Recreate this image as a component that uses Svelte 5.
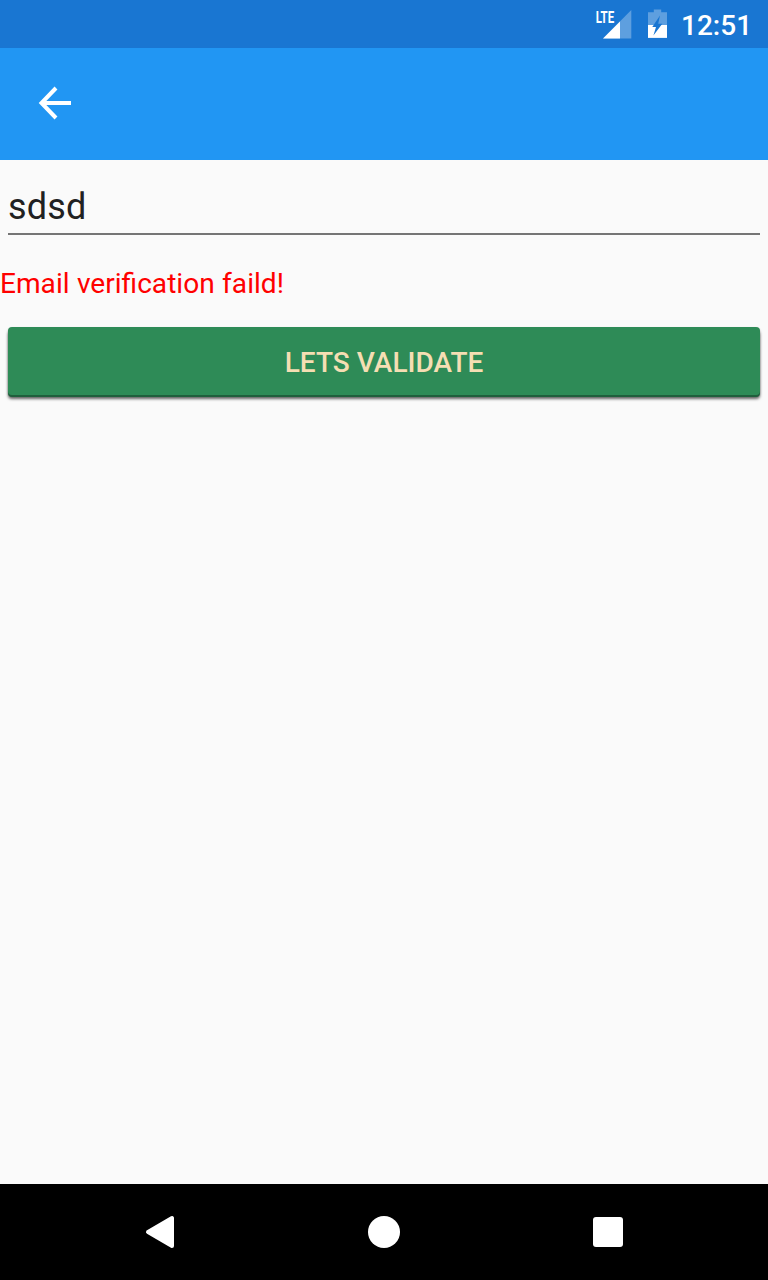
<script>
  let email = $state('sdsd');
  const message = 'Email verification faild!';
</script>

<div class="screen">
  <header class="status">
    <svg class="signal" width="38" height="32" viewBox="595 8 38 32" aria-label="LTE signal">
      <path d="M631.3 10V38.5H603Z" fill="#fff" fill-opacity=".3" />
      <path d="M620 21.6V38.5H603Z" fill="#fff" />
      <text x="595.7" y="22.5" textLength="18.5" lengthAdjust="spacingAndGlyphs">LTE</text>
    </svg>
    <svg class="battery" width="21" height="32" viewBox="647 8 21 32" aria-label="Battery charging">
      <path d="M653.8 9.5h7.4v2.7h5.8V25H648V12.2h5.8Z" fill="#fff" fill-opacity=".3" />
      <path d="M648 25H667v12.9H648Z" fill="#fff" />
      <path d="M660 15.5L652.3 27H656L653.4 35.5L662.3 23.7H658.2Z" fill="#1976d2" />
    </svg>
    <time>12:51</time>
  </header>

  <nav class="toolbar">
    <button class="back" aria-label="Back">
      <svg width="34" height="34" viewBox="38 86 34 34">
        <path d="M56 88L41.5 103L56 118M41.5 103H71" fill="none" stroke="#fff" stroke-width="4" />
      </svg>
    </button>
  </nav>

  <main>
    <input type="text" bind:value={email} spellcheck="false" aria-label="Email" />
    <p>{message}</p>
    <button class="validate">LETS VALIDATE</button>
  </main>

  <footer>
    <svg width="32" height="36" viewBox="144 1214 32 36">
      <path d="M148 1232L172 1218V1246Z" fill="#fff" stroke="#fff" stroke-width="4" stroke-linejoin="round" />
    </svg>
    <span class="home"></span>
    <span class="recent"></span>
  </footer>
</div>

<style>
  :global(body) { margin: 0; }
  .screen {
    display: flex;
    flex-direction: column;
    height: 1280px;
    background: #fafafa;
    font-family: Roboto, sans-serif;
  }
  .status {
    display: flex;
    align-items: center;
    justify-content: flex-end;
    box-sizing: border-box;
    height: 48px;
    padding-right: 17px;
    background: #1976d2;
    color: #fff;
  }
  .signal { margin-right: 14px; }
  .signal text { fill: #fff; font: 700 17px Roboto, sans-serif; }
  .battery { margin-right: 13px; }
  time {
    width: 70px;
    font-size: 28px;
    font-weight: 500;
    line-height: 33px;
    padding-top: 2px;
    white-space: nowrap;
  }
  .toolbar {
    display: flex;
    height: 112px;
    background: #2196f3;
  }
  .back {
    margin: 38px 0 0 38px;
    padding: 0;
    width: 34px;
    height: 34px;
    border: 0;
    background: none;
  }
  .back svg { display: block; }
  main {
    flex: 1;
    display: flex;
    flex-direction: column;
  }
  input {
    box-sizing: border-box;
    height: 55px;
    margin: 20px 8px 0;
    padding: 1px 0 0;
    border: 0;
    border-bottom: 2px solid #757575;
    border-radius: 0;
    background: none;
    color: #212121;
    font: 36px Roboto, sans-serif;
    letter-spacing: .2px;
    outline: 0;
  }
  p {
    margin: 32px 0 0;
    color: #f00;
    font-size: 28.1px;
    line-height: 33px;
    word-spacing: .4px;
  }
  .validate {
    height: 68px;
    margin: 27px 8px 0;
    padding: 3px 0 0;
    border: 0;
    border-radius: 4px;
    background: #2e8b57;
    box-shadow: 0 2px #1f5f3c, 0 4px 3px rgba(0, 0, 0, .6), 0 1px 2px rgba(0, 0, 0, .25);
    color: #f5deb3;
    font: 500 28px Roboto, sans-serif;
    letter-spacing: .03px;
  }
  footer {
    display: grid;
    grid-template-columns: repeat(3, 224px);
    justify-content: center;
    align-items: center;
    justify-items: center;
    height: 96px;
    background: #000;
  }
  .home { width: 32px; height: 32px; border-radius: 50%; background: #fff; }
  .recent { width: 30px; height: 30px; border-radius: 3px; background: #fff; }
</style>
